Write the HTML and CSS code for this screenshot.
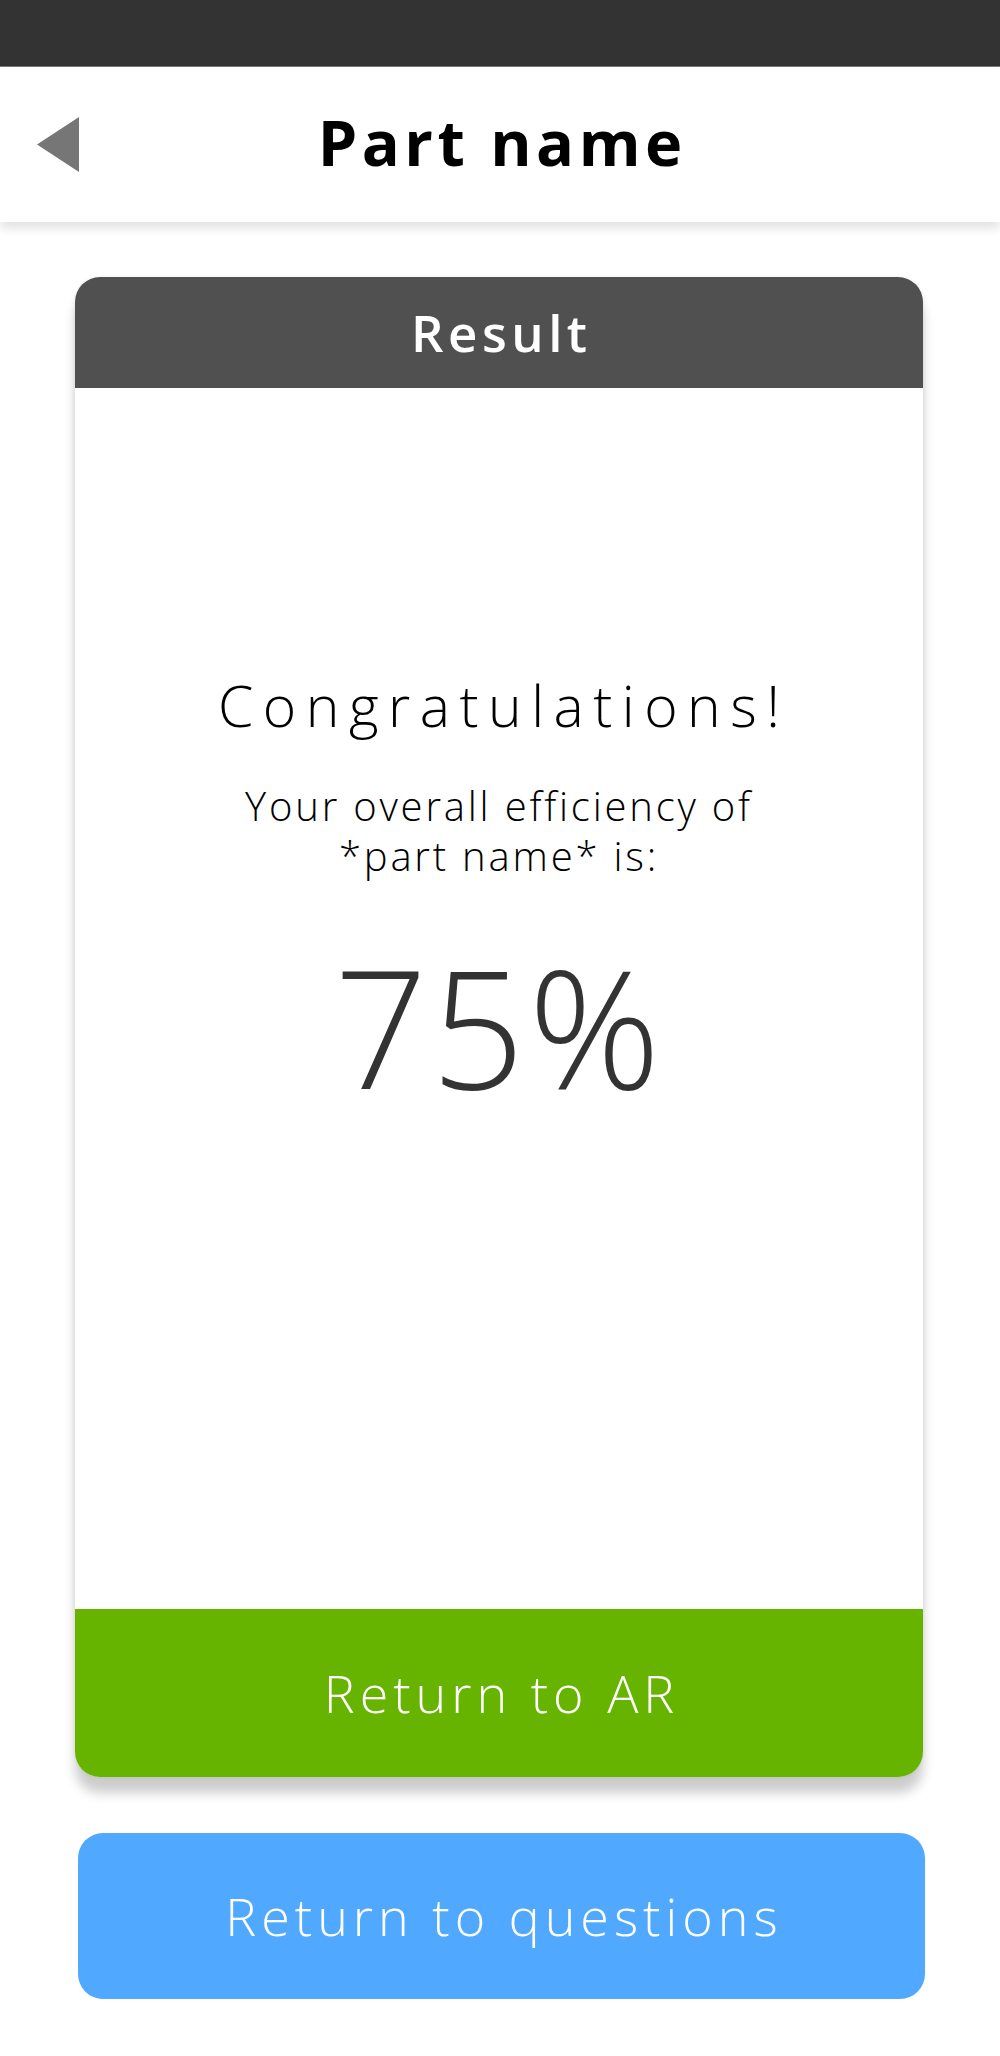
FILE: index.html
```html
<!DOCTYPE html>
<html lang="en">
<head>
<meta charset="utf-8">
<title>Part name - Result</title>
<link rel="stylesheet" href="styles.css">
</head>
<body>
<div class="status-bar"></div>
<header class="app-header">
  <button class="back-btn" aria-label="Back">
    <svg width="42" height="55" viewBox="0 0 42 55"><polygon points="42,0 42,55 0,27.5" fill="#767676"/></svg>
  </button>
  <h1 class="title">Part name</h1>
</header>
<main class="content">
  <section class="card">
    <div class="card-header">Result</div>
    <div class="card-body">
      <p class="congrats">Congratulations!</p>
      <p class="subtitle">Your overall efficiency of<br>*part name* is:</p>
      <p class="percent">75%</p>
    </div>
    <button class="btn btn-green">Return to AR</button>
  </section>
  <button class="btn btn-blue">Return to questions</button>
</main>
</body>
</html>
```

FILE: styles.css
```css
* { box-sizing: border-box; }
html, body { margin: 0; padding: 0; background: #fff; }
body {
  width: 1000px;
  font-family: "Open Sans", "Liberation Sans", sans-serif;
  color: #000;
}
.status-bar {
  height: 67px;
  background: #333333;
  border-bottom: 1px solid #7a7a7a;
}
.app-header {
  position: relative;
  height: 155px;
  background: #fff;
  box-shadow: 0 6px 10px rgba(0, 0, 0, 0.12);
  display: flex;
  align-items: center;
  justify-content: center;
  padding-bottom: 6px;
  z-index: 2;
}
.back-btn {
  position: absolute;
  left: 37px;
  top: 50px;
  border: 0;
  padding: 0;
  background: none;
  line-height: 0;
}
.title {
  margin: 0;
  font-size: 63px;
  font-weight: 700;
  line-height: 150px;
  letter-spacing: 4.5px;
  text-indent: 4.5px;
}
.content {
  padding: 55px 75px 0 75px;
  display: flex;
  flex-direction: column;
}
.card {
  width: 848px;
  border-radius: 25px;
  overflow: hidden;
  background: #fff;
  box-shadow: 0 16px 12px rgba(0, 0, 0, 0.2), 0 0 4px rgba(0, 0, 0, 0.07);
  display: flex;
  flex-direction: column;
}
.card-header {
  height: 111px;
  background: #505050;
  color: #fff;
  font-size: 51px;
  font-weight: 600;
  line-height: 111px;
  text-align: center;
  letter-spacing: 4.5px;
  text-indent: 4.5px;
}
.card-body {
  height: 1221px;
  padding-top: 284px;
  display: flex;
  flex-direction: column;
  align-items: center;
  text-align: center;
}
.card-body p { margin: 0; }
.congrats {
  font-size: 57px;
  font-weight: 300;
  line-height: 66px;
  letter-spacing: 9.5px;
  text-indent: 9.5px;
}
.subtitle {
  margin-top: 43px !important;
  font-size: 40px;
  font-weight: 300;
  line-height: 50px;
  letter-spacing: 2.8px;
}
.percent {
  margin-top: 55px !important;
  font-size: 164px;
  font-weight: 300;
  line-height: 180px;
  color: #333333;
  letter-spacing: 3.5px;
}
.btn {
  border: 0;
  font-family: inherit;
  color: #fff;
  font-size: 52px;
  font-weight: 300;
  text-align: center;
  letter-spacing: 5px;
  text-indent: 5px;
  padding: 0;
}
.btn-green {
  height: 168px;
  line-height: 168px;
  background: #66b300;
}
.btn-blue {
  margin-top: 56px;
  margin-left: 3px;
  width: 847px;
  height: 166px;
  line-height: 166px;
  background: #51a9ff;
  border-radius: 25px;
}
```
